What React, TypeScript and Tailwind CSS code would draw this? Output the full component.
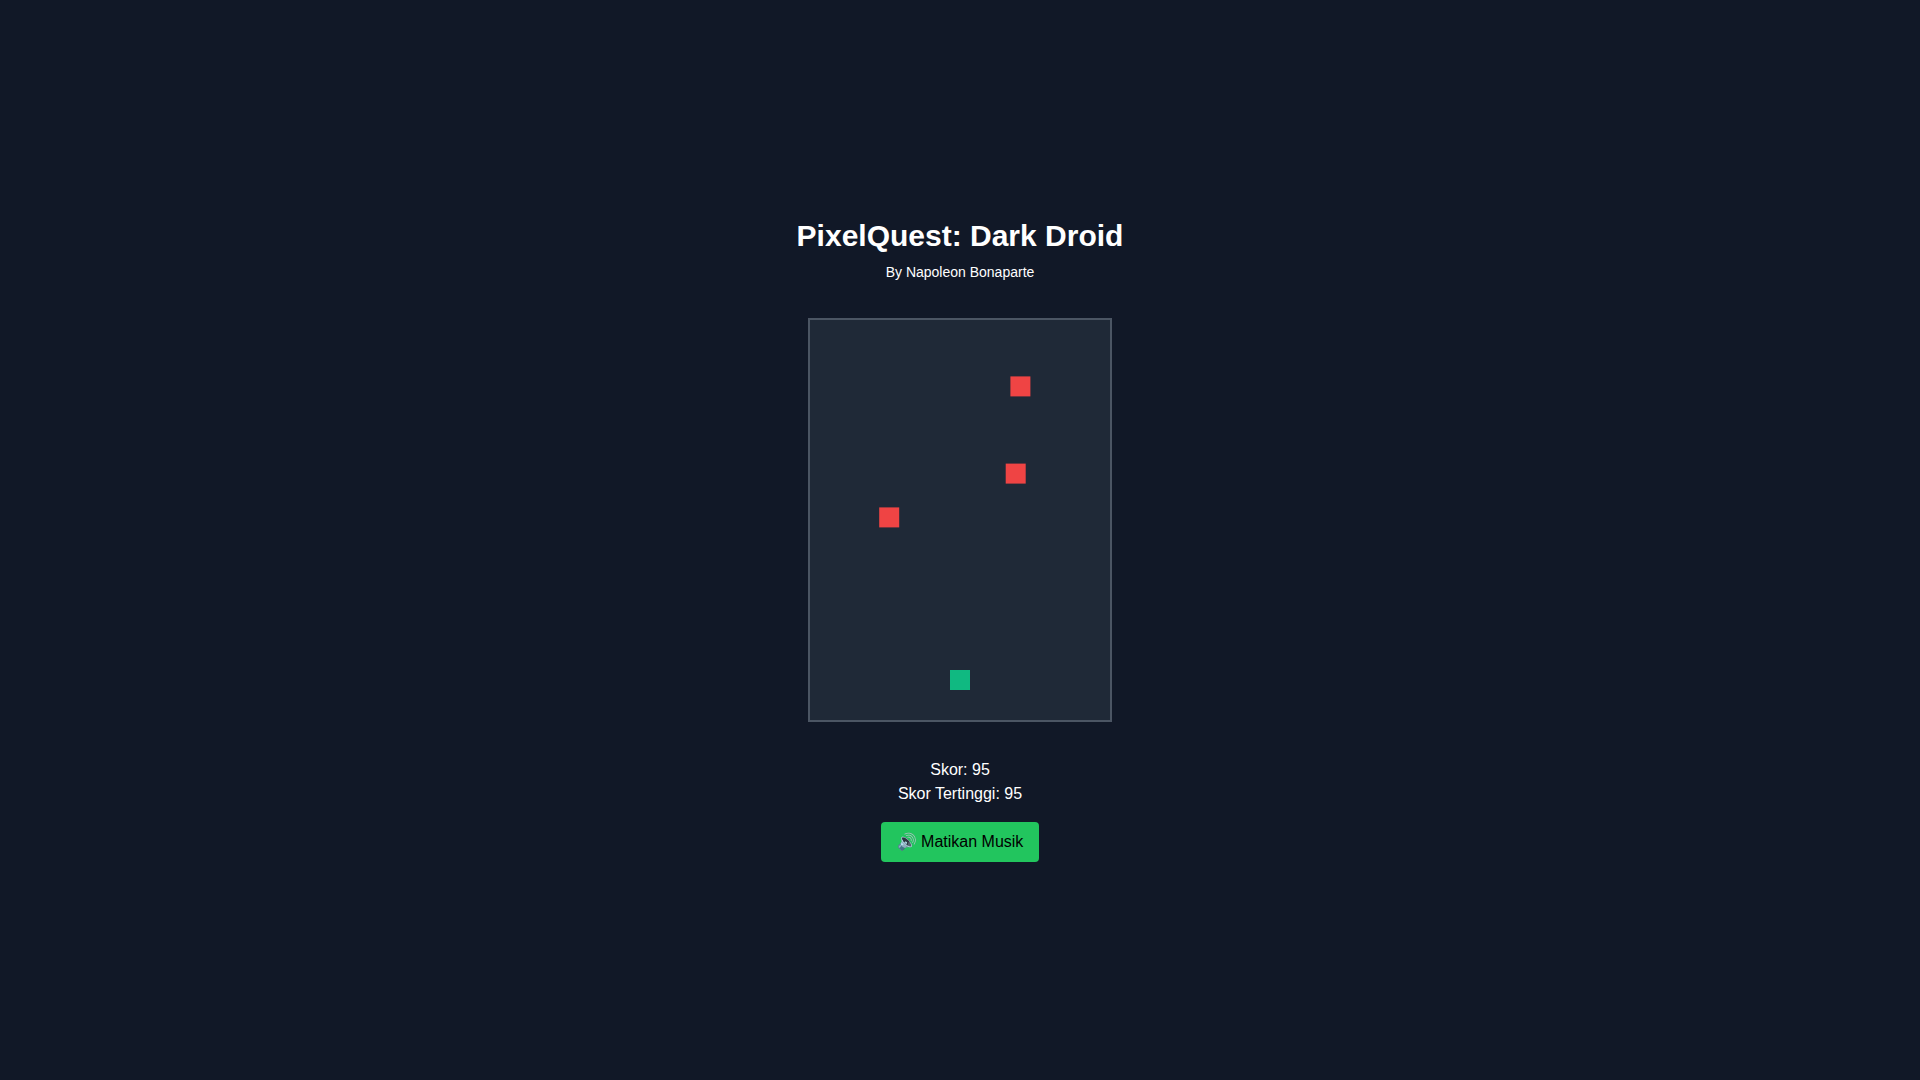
const enemies = [
  { x: 200.4, y: 56.4 },
  { x: 195.7, y: 143.6 },
  { x: 69.2, y: 187.4 },
];

export default function App() {
  return (
    <div className="min-h-screen bg-[#111827] flex flex-col items-center justify-center text-white font-['Liberation_Sans',Arial,sans-serif]">
      <h1 className="text-3xl font-bold mb-2">PixelQuest: Dark Droid</h1>
      <p className="text-sm mb-9">By Napoleon Bonaparte</p>
      <div className="relative w-[304px] h-[404px] bg-[#1f2937] border-2 border-[#4b5563]">
        {enemies.map((e, i) => (
          <div
            key={i}
            className="absolute left-0 top-0 w-5 h-5 bg-[#ef4444]"
            style={{ transform: `translate(${e.x}px, ${e.y}px)` }}
          />
        ))}
        <div className="absolute w-5 h-5 bg-[#10b981] left-[140px] bottom-[30px]" />
      </div>
      <div className="mt-9 text-center">
        <p>Skor: 95</p>
        <p>Skor Tertinggi: 95</p>
      </div>
      <button className="mt-4 px-4 py-2 rounded bg-[#22c55e] text-black">🔊 Matikan Musik</button>
    </div>
  );
}
